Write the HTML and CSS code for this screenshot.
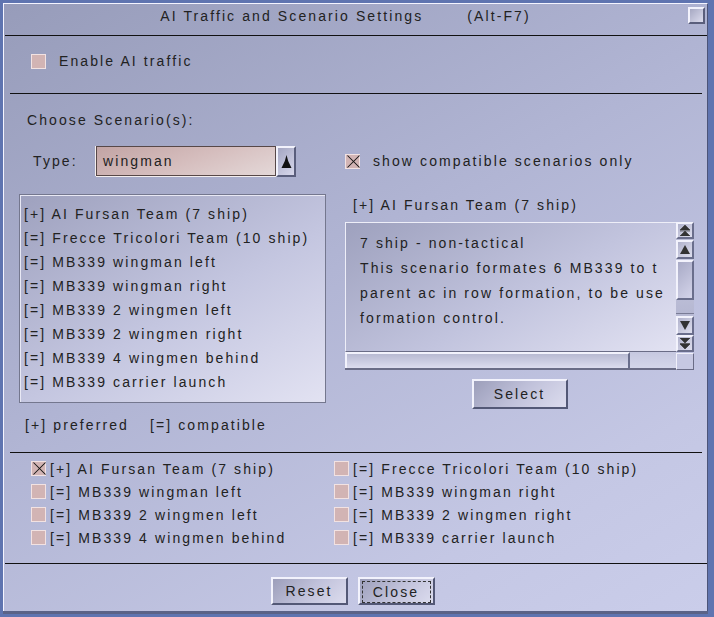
FILE: index.html
```html
<!DOCTYPE html>
<html lang="en">

<head>
    <meta charset="UTF-8" />
    <title>AI Traffic and Scenario Settings</title>
    <link rel="stylesheet" href="styles.css">
</head>

<body>
    <div class="dialog" role="dialog" aria-label="AI Traffic and Scenario Settings">
        <div class="titlebar">
            <span class="title">AI Traffic and Scenario Settings</span>
            <span class="title hotkey">(Alt-F7)</span>
            <span class="closebox"></span>
        </div>
        <div class="rule full"></div>

        <div class="enable-row">
            <label class="check"><span class="box"></span>Enable AI traffic</label>
        </div>
        <div class="rule"></div>

        <div class="scenarios">
            <div class="heading">Choose Scenario(s):</div>
            <div class="scenario-grid">
                <div class="type-row">
                    <span class="type-label">Type:</span>
                    <div class="combo">
                        <span class="combo-value">wingman</span>
                    </div>
                    <span class="combo-arrow">
                        <svg width="11" height="14" viewBox="0 0 11 14">
                            <path d="M5.5 0 Q6.5 6 10.5 13 L0.5 13 Q4.5 6 5.5 0 Z" fill="#111" />
                        </svg>
                    </span>
                </div>
                <label class="check compat"><span class="box checked"></span>show compatible scenarios only</label>

                <ul class="list">
                    <li>[+] AI Fursan Team (7 ship)</li>
                    <li>[=] Frecce Tricolori Team (10 ship)</li>
                    <li>[=] MB339 wingman left</li>
                    <li>[=] MB339 wingman right</li>
                    <li>[=] MB339 2 wingmen left</li>
                    <li>[=] MB339 2 wingmen right</li>
                    <li>[=] MB339 4 wingmen behind</li>
                    <li>[=] MB339 carrier launch</li>
                </ul>

                <div class="details">
                    <div class="details-title">[+] AI Fursan Team (7 ship)</div>
                    <div class="textpane">
                        <div class="text">
                            <p>7 ship - non-tactical</p>
                            <p>This scenario formates 6 MB339 to t</p>
                            <p>parent ac in row formation, to be use</p>
                            <p>formation control.</p>
                        </div>
                        <div class="vscroll">
                            <span class="sbtn s17">
                                <svg width="10" height="11" viewBox="0 0 10 11"><path d="M5 0 L10 5 L0 5 Z M0 6 H10 M5 6 L10 11 L0 11 Z" fill="#333" stroke="#333" stroke-width="0.6"/></svg>
                            </span>
                            <span class="sbtn s19">
                                <svg width="10" height="9" viewBox="0 0 10 9"><path d="M5 0 L10 9 L0 9 Z" fill="#333"/></svg>
                            </span>
                            <span class="track"><span class="thumb"></span></span>
                            <span class="sbtn s19">
                                <svg width="10" height="9" viewBox="0 0 10 9"><path d="M0 0 L10 0 L5 9 Z" fill="#333"/></svg>
                            </span>
                            <span class="sbtn s17">
                                <svg width="10" height="11" viewBox="0 0 10 11"><path d="M0 0 L10 0 L5 5 Z M0 5.5 H10 M0 6 L10 6 L5 11 Z" fill="#333" stroke="#333" stroke-width="0.6"/></svg>
                            </span>
                        </div>
                        <div class="hscroll"><span class="hthumb"></span></div>
                        <div class="corner"></div>
                    </div>
                    <button class="btn select-btn">Select</button>
                </div>
            </div>
            <div class="legend"><span class="legend-item">[+] preferred</span><span>[=] compatible</span></div>
        </div>
        <div class="rule"></div>

        <div class="picks">
            <label class="check"><span class="box checked"></span>[+] AI Fursan Team (7 ship)</label>
            <label class="check"><span class="box"></span>[=] Frecce Tricolori Team (10 ship)</label>
            <label class="check"><span class="box"></span>[=] MB339 wingman left</label>
            <label class="check"><span class="box"></span>[=] MB339 wingman right</label>
            <label class="check"><span class="box"></span>[=] MB339 2 wingmen left</label>
            <label class="check"><span class="box"></span>[=] MB339 2 wingmen right</label>
            <label class="check"><span class="box"></span>[=] MB339 4 wingmen behind</label>
            <label class="check"><span class="box"></span>[=] MB339 carrier launch</label>
        </div>
        <div class="rule full"></div>

        <div class="buttons">
            <button class="btn">Reset</button>
            <button class="btn focused"><span>Close</span></button>
        </div>
    </div>
</body>

</html>
```

FILE: styles.css
```css
body {
    margin: 0;
    width: 714px;
    height: 617px;
    overflow: hidden;
    background: #5f74b0;
    font-family: "Liberation Sans", Arial, sans-serif;
    font-size: 14px;
    letter-spacing: 2.1px;
    color: #222;
}

/* the dialog window */
.dialog {
    box-sizing: border-box;
    margin: 3px 0 0 3px;
    width: 705px;
    height: 608px;
    border-top: 1px solid #f4f4ff;
    border-left: 1px solid #f4f4ff;
    border-right: 1px solid #4c5478;
    background: linear-gradient(150deg, #979cba 0%, #b1b5d4 45%, #c4c7e4 80%, #cacdea 100%);
    box-shadow: 0 3px 0 #5b6387;
    display: flex;
    flex-direction: column;
}

.titlebar {
    height: 31px;
    display: flex;
    align-items: center;
    justify-content: center;
    position: relative;
    padding-right: 20px;
}

.title {
    line-height: 16px;
    margin-top: -7px;
}

.hotkey {
    margin-left: 44px;
}

.closebox {
    position: absolute;
    right: 2px;
    top: 3px;
    width: 13px;
    height: 13px;
    border-top: 2px solid #f2f2fc;
    border-left: 2px solid #f2f2fc;
    border-right: 2px solid #5a5e7c;
    border-bottom: 2px solid #5a5e7c;
    background: linear-gradient(135deg, #a6a8c2, #dcdcee);
}

.rule {
    height: 1px;
    background: #111;
    margin: 0 5px 0 6px;
    flex: none;
}

.rule.full {
    margin: 0 0 0 1px;
}

/* checkboxes */
.check {
    display: flex;
    align-items: center;
    line-height: 16px;
    white-space: nowrap;
}

.box {
    box-sizing: border-box;
    width: 15px;
    height: 15px;
    background: #d2b4b4;
    border: 1px solid #f2e2e2;
    flex: none;
    position: relative;
}

.box.checked::before,
.box.checked::after {
    content: "";
    position: absolute;
    left: -1px;
    top: 6px;
    width: 17px;
    height: 1px;
    background: #111;
    transform: rotate(45deg);
}

.box.checked::after {
    transform: rotate(-45deg);
}

.enable-row {
    height: 57px;
    box-sizing: border-box;
    padding: 17px 0 0 27px;
}

.enable-row .box {
    margin-right: 13px;
}

.scenarios {
    height: 358px;
    box-sizing: border-box;
    padding: 18px 0 0 15px;
}

.heading {
    line-height: 16px;
    padding-left: 8px;
}

.scenario-grid {
    display: grid;
    grid-template-columns: 307px 349px;
    grid-template-rows: 30px 209px;
    column-gap: 19px;
    row-gap: 18px;
    margin-top: 18px;
}

.type-row {
    display: flex;
    align-items: center;
    height: 30px;
}

.type-label {
    width: 63px;
    padding-left: 14px;
    flex: none;
}

.combo {
    box-sizing: border-box;
    width: 180px;
    height: 30px;
    border: 1px solid #574848;
    box-shadow: 0 1px 0 #f4eeee, -1px 0 0 #f4eeee;
    background: linear-gradient(160deg, #c2a4a4 0%, #d5bdbd 50%, #e4d8d8 100%);
    display: flex;
    align-items: center;
    padding-left: 6px;
}

.combo-arrow {
    box-sizing: border-box;
    width: 20px;
    height: 31px;
    border-top: 2px solid #f2f2fc;
    border-left: 2px solid #f2f2fc;
    border-right: 2px solid #5a5e7c;
    border-bottom: 2px solid #5a5e7c;
    background: linear-gradient(135deg, #a4a6c2, #d8d8ec);
    display: flex;
    align-items: center;
    justify-content: center;
    padding-top: 1px;
}

.compat .box {
    margin-right: 13px;
}

/* scenario list */
.list {
    list-style: none;
    margin: 0;
    box-sizing: border-box;
    height: 209px;
    padding: 7px 0 0 4px;
    border: 1px solid #74778e;
    box-shadow: inset 1px 1px 0 #e8e8f4;
    background: linear-gradient(150deg, #9ea1be 0%, #c4c6e0 55%, #e2e2f2 100%);
    white-space: nowrap;
}

.list li {
    line-height: 24px;
}

.details {
    display: flex;
    flex-direction: column;
}

.details-title {
    line-height: 16px;
    margin: 3px 0 0 8px;
}

.textpane {
    margin-top: 9px;
    display: grid;
    grid-template-columns: 331px 18px;
    grid-template-rows: 130px 18px;
    flex: none;
}

.text {
    box-sizing: border-box;
    border-top: 1px solid #eeeef8;
    border-left: 1px solid #eeeef8;
    border-bottom: 1px solid #6a6c86;
    background: linear-gradient(150deg, #9ea1be 0%, #c2c4de 55%, #e2e2f2 100%);
    padding: 8px 0 0 14px;
    overflow: hidden;
    white-space: nowrap;
}

.text p {
    margin: 0;
    line-height: 25px;
}

.vscroll {
    display: flex;
    flex-direction: column;
    background: #b8bad4;
}

.sbtn {
    box-sizing: border-box;
    border-top: 2px solid #f2f2fc;
    border-left: 2px solid #f2f2fc;
    border-right: 2px solid #6a6e8c;
    border-bottom: 2px solid #6a6e8c;
    background: linear-gradient(135deg, #b0b2cc, #dedeee);
    display: flex;
    align-items: center;
    justify-content: center;
    flex: none;
}

.s17 {
    height: 17px;
}

.s19 {
    height: 19px;
    margin-top: 1px;
}

.track {
    flex: 1;
    display: flex;
    flex-direction: column;
    background: linear-gradient(180deg, #c6c8e0, #b6b8d2);
    border-bottom: 1px solid #7a7c96;
    margin-bottom: 1px;
}

.thumb {
    box-sizing: border-box;
    height: 40px;
    margin-top: 1px;
    border: 2px solid #6a6e8c;
    border-top-color: #f2f2fc;
    border-left-color: #f2f2fc;
    background: linear-gradient(135deg, #a8aac6, #d4d4ea);
}

.hscroll {
    display: flex;
    background: linear-gradient(180deg, #c6c8e0, #d4d6ea);
    border-bottom: 2px solid #6a6c86;
}

.hthumb {
    box-sizing: border-box;
    width: 285px;
    border-top: 2px solid #f2f2fc;
    border-left: 2px solid #f2f2fc;
    border-right: 2px solid #6a6e8c;
    background: linear-gradient(180deg, #b8bad2, #dcdcee);
}

.corner {
    margin-top: 1px;
    border: 1px solid #f0f0fa;
    border-right-color: #6a6c86;
    border-bottom-color: #6a6c86;
    background: #c6c8e2;
}

/* push buttons */
.btn {
    box-sizing: border-box;
    font: inherit;
    letter-spacing: 2.1px;
    color: #222;
    padding: 0;
    border-top: 2px solid #f2f2fc;
    border-left: 2px solid #f2f2fc;
    border-right: 2px solid #535876;
    border-bottom: 2px solid #535876;
    background: linear-gradient(135deg, #9c9eba 0%, #c0c1da 50%, #dcdcee 100%);
}

.select-btn {
    width: 96px;
    height: 30px;
    margin: 9px auto 0;
    flex: none;
}

.legend {
    margin-top: 14px;
    line-height: 16px;
    padding-left: 6px;
    display: flex;
}

.legend-item {
    width: 125px;
}

/* per-scenario checkboxes */
.picks {
    height: 110px;
    box-sizing: border-box;
    padding: 4px 0 0 27px;
    display: grid;
    grid-template-columns: 303px 1fr;
    grid-auto-rows: 23px;
    align-content: start;
}

.picks .box {
    margin-right: 4px;
}

.buttons {
    flex: 1;
    display: flex;
    justify-content: center;
    align-items: flex-start;
    gap: 10px;
    padding: 13px 0 0 0;
    margin-left: -6px;
}

.buttons .btn {
    width: 77px;
    height: 28px;
}

.btn.focused {
    padding: 2px;
}

.btn.focused span {
    display: flex;
    align-items: center;
    justify-content: center;
    height: 100%;
    border: 1px dashed #333;
}
```
